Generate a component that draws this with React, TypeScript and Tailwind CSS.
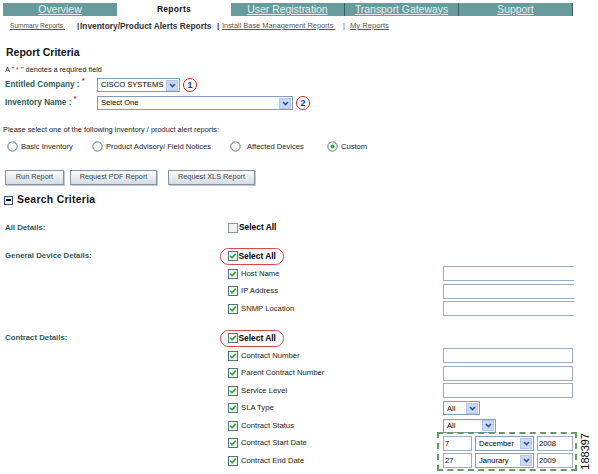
import React from 'react';

const tabs = ['Overview', 'Reports', 'User Registration', 'Transport Gateways', 'Support'];

function Check({ on }: { on: boolean }) {
  return (
    <svg width="10" height="10" viewBox="0 0 10 10" className="shrink-0">
      <rect x="0.5" y="0.5" width="9" height="9" fill="#f1f4f2" stroke={on ? '#4f7486' : '#8c9aa6'} />
      {on && <path d="M2.2 4.7 L4.1 6.7 L7.7 2.9" fill="none" stroke="#2a9f2a" strokeWidth="1.6" />}
    </svg>
  );
}

function Radio({ on }: { on?: boolean }) {
  return (
    <svg width="11" height="11" viewBox="0 0 11 11" className="shrink-0">
      <circle cx="5.5" cy="5.5" r="4.7" fill="#f6f6f6" stroke="#5f7d8e" />
      {on && <circle cx="5.5" cy="5.5" r="2" fill="#35a535" />}
    </svg>
  );
}

function Arrow() {
  return (
    <span className="flex h-[11px] w-[12px] shrink-0 items-center justify-center border border-[#b4c6ea] bg-[#c8d8f6]">
      <svg width="7" height="5" viewBox="0 0 7 5">
        <path d="M1 1 L3.5 3.6 L6 1" fill="none" stroke="#2f4f93" strokeWidth="1.5" />
      </svg>
    </span>
  );
}

function Select({ text, w, h = 'h-[14px]' }: { text: string; w: string; h?: string }) {
  return (
    <div className={`${w} ${h} flex items-center justify-between border border-[#7f9db9] bg-white pl-[3px] pr-[1px] text-[7.6px] text-black`}>
      <span>{text}</span>
      <Arrow />
    </div>
  );
}

function Num({ n }: { n: string }) {
  return (
    <span className="flex h-[14px] w-[14px] items-center justify-center rounded-full border-[1.5px] border-[#d42020] text-[9px] font-bold leading-none text-[#1a2fb0]">
      {n}
    </span>
  );
}

function SelectAll({ ring, on }: { ring?: boolean; on: boolean }) {
  if (ring) {
    return (
      <div className="-ml-[8px] flex h-[17px] w-[64px] items-center gap-[1px] rounded-full border-[1.5px] border-[#d24a4a] pl-[6.5px]">
        <Check on={on} />
        <span className="text-[8.4px] font-bold text-black">Select All</span>
      </div>
    );
  }
  return (
    <div className="flex items-center gap-[1px]">
      <Check on={on} />
      <span className="text-[8.4px] font-bold text-black">Select All</span>
    </div>
  );
}

function TextBox({ w = 'w-[130px]', open }: { w?: string; open?: boolean }) {
  return <div className={`${w} h-[15px] border border-[#9aaebf] bg-white ${open ? 'border-r-0' : ''}`} />;
}

function ItemRow({ label, children }: { label: string; children?: React.ReactNode }) {
  return (
    <div className="flex h-[17.5px] items-center">
      <div className="flex w-[215px] items-center gap-[3px]">
        <Check on />
        <span className="text-[7.7px] text-[#222]">{label}</span>
      </div>
      {children}
    </div>
  );
}

function Section({ label, children }: { label: string; children: React.ReactNode }) {
  return (
    <div className="flex">
      <div className="flex h-[17.5px] w-[228px] items-center pl-[5px] text-[7.8px] font-bold text-[#2f5a5a]">{label}</div>
      <div className="flex flex-col">{children}</div>
    </div>
  );
}

function Btn({ label, w, ml }: { label: string; w: string; ml: string }) {
  return (
    <div className={`${w} ${ml} flex h-[15px] items-center justify-center border border-[#8293a3] bg-gradient-to-b from-[#fbfbfb] to-[#d8dce0] text-[7.3px] text-[#3a4650] shadow-[1px_1px_0_#c4c8cc]`}>
      {label}
    </div>
  );
}

function DateRow({ d, m, y }: { d: string; m: string; y: string }) {
  return (
    <div className="flex items-center gap-[3px]">
      <div className="flex h-[15px] w-[29px] items-center border border-[#9aaebf] bg-white pl-[1px] text-[7.6px]">{d}</div>
      <Select text={m} w="w-[59px]" h="h-[15px]" />
      <div className="flex h-[15px] w-[36px] items-center border border-[#9aaebf] bg-white pl-[1px] text-[7.6px]">{y}</div>
    </div>
  );
}

export default function App() {
  return (
    <div className="relative h-[474px] w-[598px] overflow-hidden bg-white pt-[3px] font-['Liberation_Sans',Arial,sans-serif] text-black">
      <div className="ml-[3px] flex h-[13px] w-[570px]">
        {tabs.map((t, i) =>
          t === 'Reports' ? (
            <div key={t} className="flex w-[114px] items-center justify-center bg-white text-[8.5px] font-bold tracking-[0.3px] text-[#111]">
              {t}
            </div>
          ) : (
            <div
              key={t}
              className={`flex w-[114px] items-center justify-center bg-[#689c9c] text-[10.4px] text-[#e9f0f0] underline ${i >= 2 ? 'border-r border-[#34605f]' : ''}`}
            >
              {t}
            </div>
          ),
        )}
      </div>

      <div className="mt-[5px] flex h-[10px] items-center pl-[10px] leading-[10px] text-[#555]">
        <span className="w-[67px] text-[6.6px] underline">Summary Reports&nbsp;</span>
        <span className="w-[3px] text-[8px] font-bold text-[#333]">|</span>
        <span className="w-[137px] text-[8.4px] font-bold text-[#333]">Inventory/Product Alerts Reports</span>
        <span className="w-[5px] text-[8px] font-bold text-[#333]">|</span>
        <span className="w-[121px] text-[7.4px] underline">Install Base Management Reports&nbsp;</span>
        <span className="w-[7px] text-[7.4px]">|</span>
        <span className="text-[7.6px] underline">My Reports</span>
      </div>

      <div className="mt-[14px] h-[14px] pl-[6px] text-[10.5px] font-bold leading-[14px] text-[#111]">Report Criteria</div>

      <div className="mt-[6px] h-[10px] pl-[5px] text-[7.3px] leading-[10px] text-[#222]">
        A &quot; <span className="text-[#e02020]">*</span> &quot; denotes a required field
      </div>

      <div className="mt-[3px] flex h-[14px] items-center">
        <div className="w-[97px] pl-[5px] text-[8.2px] font-bold text-[#2f5a5a]">
          Entitled Company : <sup className="text-[7px] text-[#e02020]">*</sup>
        </div>
        <Select text="CISCO SYSTEMS" w="w-[83px]" />
        <div className="ml-[3px]">
          <Num n="1" />
        </div>
      </div>

      <div className="mt-[4px] flex h-[14px] items-center">
        <div className="w-[97px] pl-[5px] text-[8.2px] font-bold text-[#2f5a5a]">
          Inventory Name : <sup className="text-[7px] text-[#e02020]">*</sup>
        </div>
        <Select text="Select One" w="w-[196px]" />
        <div className="ml-[3px]">
          <Num n="2" />
        </div>
      </div>

      <div className="mt-[15px] h-[10px] pl-[3px] text-[7.4px] leading-[10px] text-[#222]">
        Please select one of the following inventory / product alert reports:
      </div>

      <div className="mt-[6px] flex h-[12px] items-center pl-[7px] text-[7.6px] text-[#222]">
        <div className="flex w-[85px] items-center gap-[3px]">
          <Radio />
          <span>Basic Inventory</span>
        </div>
        <div className="flex w-[138px] items-center gap-[3px]">
          <Radio />
          <span>Product Advisory/ Field Notices</span>
        </div>
        <div className="flex w-[97px] items-center gap-[6px]">
          <Radio />
          <span>Affected Devices</span>
        </div>
        <div className="flex items-center gap-[3px]">
          <Radio on />
          <span>Custom</span>
        </div>
      </div>

      <div className="mt-[17px] flex">
        <Btn label="Run Report" w="w-[59px]" ml="ml-[5px]" />
        <Btn label="Request PDF Report" w="w-[87px]" ml="ml-[6px]" />
        <Btn label="Request XLS Report" w="w-[87px]" ml="ml-[11px]" />
      </div>

      <div className="mt-[8px] flex h-[14px] items-center pl-[4px]">
        <span className="flex h-[9px] w-[9px] items-center justify-center border border-[#35507a] bg-white">
          <span className="h-[1.5px] w-[5px] bg-black" />
        </span>
        <span className="ml-[4px] text-[10.4px] font-bold tracking-[0.3px] text-[#111]">Search Criteria</span>
      </div>

      <div className="mt-[12px]">
        <Section label="All Details:">
          <div className="flex h-[17.5px] items-center">
            <SelectAll on={false} />
          </div>
        </Section>
      </div>

      <div className="mt-[11px]">
        <Section label="General Device Details:">
          <div className="flex h-[17.5px] items-center">
            <SelectAll ring on />
          </div>
          <ItemRow label="Host Name">
            <TextBox w="w-[131px]" open />
          </ItemRow>
          <ItemRow label="IP Address">
            <TextBox w="w-[131px]" open />
          </ItemRow>
          <ItemRow label="SNMP Location">
            <TextBox w="w-[131px]" open />
          </ItemRow>
        </Section>
      </div>

      <div className="mt-[12px]">
        <Section label="Contract Details:">
          <div className="flex h-[17.5px] items-center">
            <SelectAll ring on />
          </div>
          <ItemRow label="Contract Number">
            <TextBox />
          </ItemRow>
          <ItemRow label="Parent Contract Number">
            <TextBox />
          </ItemRow>
          <ItemRow label="Service Level">
            <TextBox />
          </ItemRow>
          <ItemRow label="SLA Type">
            <Select text="All" w="w-[37px]" />
          </ItemRow>
          <ItemRow label="Contract Status">
            <Select text="All" w="w-[53px]" />
          </ItemRow>
          <ItemRow label="Contract Start Date">
            <DateRow d="7" m="December" y="2008" />
          </ItemRow>
          <ItemRow label="Contract End Date">
            <DateRow d="27" m="Janurary" y="2009" />
          </ItemRow>
        </Section>
      </div>

      <div className="absolute left-[437px] top-[432px] h-[39px] w-[140px] border-2 border-dashed border-[#5f9e5f]" />
      <div className="absolute left-[579px] top-[433px] rotate-180 text-[11px] leading-[12px] text-black [writing-mode:vertical-rl]">
        188397
      </div>
    </div>
  );
}
